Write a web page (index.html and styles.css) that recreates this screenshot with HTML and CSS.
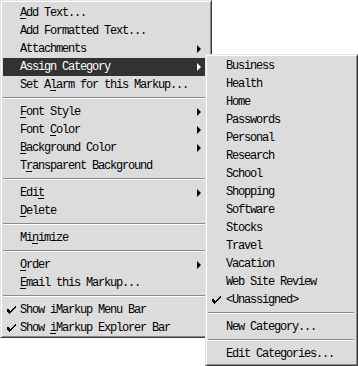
FILE: index.html
```html
<!DOCTYPE html>
<html lang="en">
<head>
    <meta charset="UTF-8">
    <title>iMarkup menu</title>
    <link rel="stylesheet" href="styles.css">
</head>
<body>

<div class="stage">
    <ul class="menu main-menu">
        <li class="item"><u>A</u>dd Text...</li>
        <li class="item">Add Formatted Text...</li>
        <li class="item sub">Attachments</li>
        <li class="item sub active">Assign Category</li>
        <li class="item">Set A<u>l</u>arm for this Markup...</li>
        <li class="sep"></li>
        <li class="item sub"><u>F</u>ont Style</li>
        <li class="item sub">Font <u>C</u>olor</li>
        <li class="item sub"><u>B</u>ackground Color</li>
        <li class="item">T<u>r</u>ansparent Background</li>
        <li class="sep"></li>
        <li class="item sub">Edi<u>t</u></li>
        <li class="item"><u>D</u>elete</li>
        <li class="sep"></li>
        <li class="item">Mi<u>n</u>imize</li>
        <li class="sep"></li>
        <li class="item sub"><u>O</u>rder</li>
        <li class="item"><u>E</u>mail this Markup...</li>
        <li class="sep"></li>
        <li class="item checked">Show iMarkup Menu Bar</li>
        <li class="item checked">Show <u>i</u>Markup Explorer Bar</li>
    </ul>

    <ul class="menu sub-menu">
        <li class="item">Business</li>
        <li class="item">Health</li>
        <li class="item">Home</li>
        <li class="item">Passwords</li>
        <li class="item">Personal</li>
        <li class="item">Research</li>
        <li class="item">School</li>
        <li class="item">Shopping</li>
        <li class="item">Software</li>
        <li class="item">Stocks</li>
        <li class="item">Travel</li>
        <li class="item">Vacation</li>
        <li class="item">Web Site Review</li>
        <li class="item checked">&lt;Unassigned&gt;</li>
        <li class="sep"></li>
        <li class="item">New Category...</li>
        <li class="sep"></li>
        <li class="item">Edit Categories...</li>
    </ul>
</div>

</body>
</html>
```

FILE: styles.css
```css
* {
    box-sizing: border-box;
}

body {
    margin: 0;
    padding: 0;
    background: #fff;
    font-family: 'Liberation Mono', 'DejaVu Sans Mono', monospace;
    font-size: 12px;
    letter-spacing: -1.2px;
    color: #000;
}

.stage {
    position: relative;
    width: 358px;
    height: 366px;
}

.menu {
    list-style: none;
    margin: 0;
    padding: 2px;
    background: #dcdcdc;
    border: 1px solid;
    border-color: #e4e4e4 #3c3c3c #3c3c3c #e4e4e4;
    box-shadow: inset 1px 1px 0 #fff, inset -1px -1px 0 #8a8a8a;
}

.main-menu {
    width: 212px;
    padding-top: 3px;
    padding-bottom: 0;
}

.sub-menu {
    position: absolute;
    left: 205px;
    top: 54px;
    width: 153px;
    padding-right: 3px;
}

.item {
    position: relative;
    height: 18px;
    line-height: 18px;
    padding-left: 17px;
    white-space: nowrap;
}

.sub-menu .item {
    padding-left: 18px;
}

.item u {
    text-decoration: underline;
    text-underline-offset: 2px;
}

.item.active {
    background: #323232;
    color: #fff;
}

.item.sub::after {
    content: '';
    position: absolute;
    right: 8px;
    top: 5px;
    border-left: 4px solid #000;
    border-top: 4px solid transparent;
    border-bottom: 4px solid transparent;
}

.item.active::after {
    border-left-color: #fff;
}

.item.checked::before {
    content: '';
    position: absolute;
    left: 4px;
    top: 5px;
    width: 9px;
    height: 8px;
    background: url("data:image/svg+xml;utf8,<svg xmlns='http://www.w3.org/2000/svg' width='9' height='8'><path d='M0 3h2v1h1v1h1v-1h1v-1h1v-1h1v-1h1v-1h1v2h-1v1h-1v1h-1v1h-1v1h-1v1h-1v1h-1v-1h-1v-1h-1v-1h-1z' fill='black'/></svg>") no-repeat;
}

.sep {
    height: 9px;
    position: relative;
}

.sep::before {
    content: '';
    position: absolute;
    left: 0;
    right: 0;
    top: 3px;
    border-top: 1px solid #8a8a8a;
    border-bottom: 1px solid #fff;
}
```
